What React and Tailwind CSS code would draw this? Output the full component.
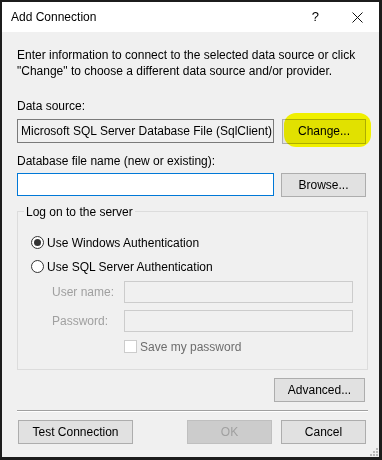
import { useState } from 'react';

const FONT = { fontFamily: "'Liberation Sans', Arial, sans-serif" };

function Button({ children, className = "", disabled = false }) {
  return (
    <button
      disabled={disabled}
      className={
        "h-[24px] border text-[12px] leading-none whitespace-nowrap " +
        (disabled
          ? "bg-[#cccccc] border-[#bfbfbf] text-[#a0a0a0] "
          : "bg-[#e1e1e1] border-[#adadad] text-black ") +
        className
      }
    >
      {children}
    </button>
  );
}

function Radio({ checked, label }) {
  return (
    <div className="flex items-center h-[16px]">
      <span className="w-[13px] h-[13px] rounded-full border border-[#333] bg-white flex items-center justify-center">
        {checked && <span className="w-[7px] h-[7px] rounded-full bg-[#333]" />}
      </span>
      <span className="ml-[3px] text-[12px] leading-[16px] text-black whitespace-nowrap">{label}</span>
    </div>
  );
}

function DisabledField({ label }) {
  return (
    <div className="flex items-center h-[22px]">
      <span className="w-[93px] pl-[21px] text-[12px] text-[#a0a0a0] whitespace-nowrap">{label}</span>
      <div className="flex-1 h-[22px] border border-[#cccccc] bg-[#f0f0f0]" />
    </div>
  );
}

export default function App() {
  const [fileName, setFileName] = useState("");

  return (
    <div style={FONT} className="w-[382px] h-[460px] bg-[#1c1c1c] pl-[2px] pt-[2px] pr-[3px] pb-[3px]">
      <div className="w-full h-full flex flex-col bg-[#f0f0f0]">
        {/* Title bar */}
        <div className="h-[30px] bg-white flex items-center shrink-0">
          <span className="ml-[9px] text-[12px] text-black">Add Connection</span>
          <span className="ml-auto mr-[33px] text-[13px] text-black">?</span>
          <svg width="11" height="11" viewBox="0 0 11 11" className="mr-[16px]">
            <path d="M0.5 0.5 L10.5 10.5 M10.5 0.5 L0.5 10.5" stroke="#111" strokeWidth="1" />
          </svg>
        </div>

        {/* Body */}
        <div className="relative flex-1 flex flex-col pl-[15px] pr-[11px]">
          <p className="mt-[15px] text-[12px] leading-[16px] text-black whitespace-nowrap">
            Enter information to connect to the selected data source or click<br />
            "Change" to choose a different data source and/or provider.
          </p>

          <p className="mt-[19px] text-[12px] leading-[16px] text-black">Data source:</p>
          <div className="mt-[4px] flex items-center">
            <div className="w-[257px] h-[24px] border border-[#7a7a7a] bg-[#f0f0f0] flex items-center pl-[3px] text-[12px] text-black whitespace-nowrap overflow-hidden">
              Microsoft SQL Server Database File (SqlClient)
            </div>
            <div className="relative ml-[8px]">
              <Button className="w-[84px] h-[25px]">Change...</Button>
              {/* highlighter mark */}
              <div className="absolute left-[2px] -top-[5px] w-[87px] h-[34px] rounded-[12px] bg-[#ffff00] mix-blend-multiply blur-[0.5px]" />
            </div>
          </div>

          <p className="mt-[9px] text-[12px] leading-[16px] text-black">Database file name (new or existing):</p>
          <div className="mt-[4px] flex items-center">
            <input
              value={fileName}
              onChange={(e) => setFileName(e.target.value)}
              className="w-[257px] h-[23px] border border-[#0078d7] bg-white outline-none text-[12px] px-[3px]"
            />
            <Button className="ml-[7px] w-[85px] h-[23px]">Browse...</Button>
          </div>

          {/* Log on group */}
          <fieldset className="mt-[7px] border border-[#dcdcdc] pl-[13px] pr-[14px] pb-[14px] flex flex-col">
            <legend className="-ml-[7px] px-[2px] text-[12px] leading-[16px] text-black">Log on to the server</legend>
            <div className="mt-[15px]">
              <Radio checked label="Use Windows Authentication" />
            </div>
            <div className="mt-[8px]">
              <Radio label="Use SQL Server Authentication" />
            </div>
            <div className="mt-[6px] flex flex-col gap-[7px]">
              <DisabledField label="User name:" />
              <DisabledField label="Password:" />
            </div>
            <div className="mt-[7px] flex items-center h-[16px] pl-[93px]">
              <span className="w-[13px] h-[13px] border border-[#cccccc] bg-white" />
              <span className="ml-[3px] text-[12px] text-[#6d6d6d]">Save my password</span>
            </div>
          </fieldset>

          <div className="mt-[8px] flex justify-end pr-[3px]">
            <Button className="w-[91px]">Advanced...</Button>
          </div>

          <div className="mt-[8px] h-[2px] border-t border-[#a0a0a0] border-b border-b-white" />

          <div className="mt-[8px] flex items-center pr-[2px]">
            <Button className="ml-[1px] w-[115px]">Test Connection</Button>
            <Button disabled className="ml-auto w-[85px]">OK</Button>
            <Button className="ml-[9px] w-[85px]">Cancel</Button>
          </div>

          {/* size grip */}
          <svg width="10" height="10" viewBox="0 0 10 10" className="absolute right-[1px] bottom-[1px]">
            {[[8, 0], [8, 3], [8, 6], [5, 3], [5, 6], [2, 6]].map(([x, y]) => (
              <rect key={x + "-" + y} x={x} y={y + 2} width="2" height="2" fill="#b8b8b8" />
            ))}
          </svg>
        </div>
      </div>
    </div>
  );
}
